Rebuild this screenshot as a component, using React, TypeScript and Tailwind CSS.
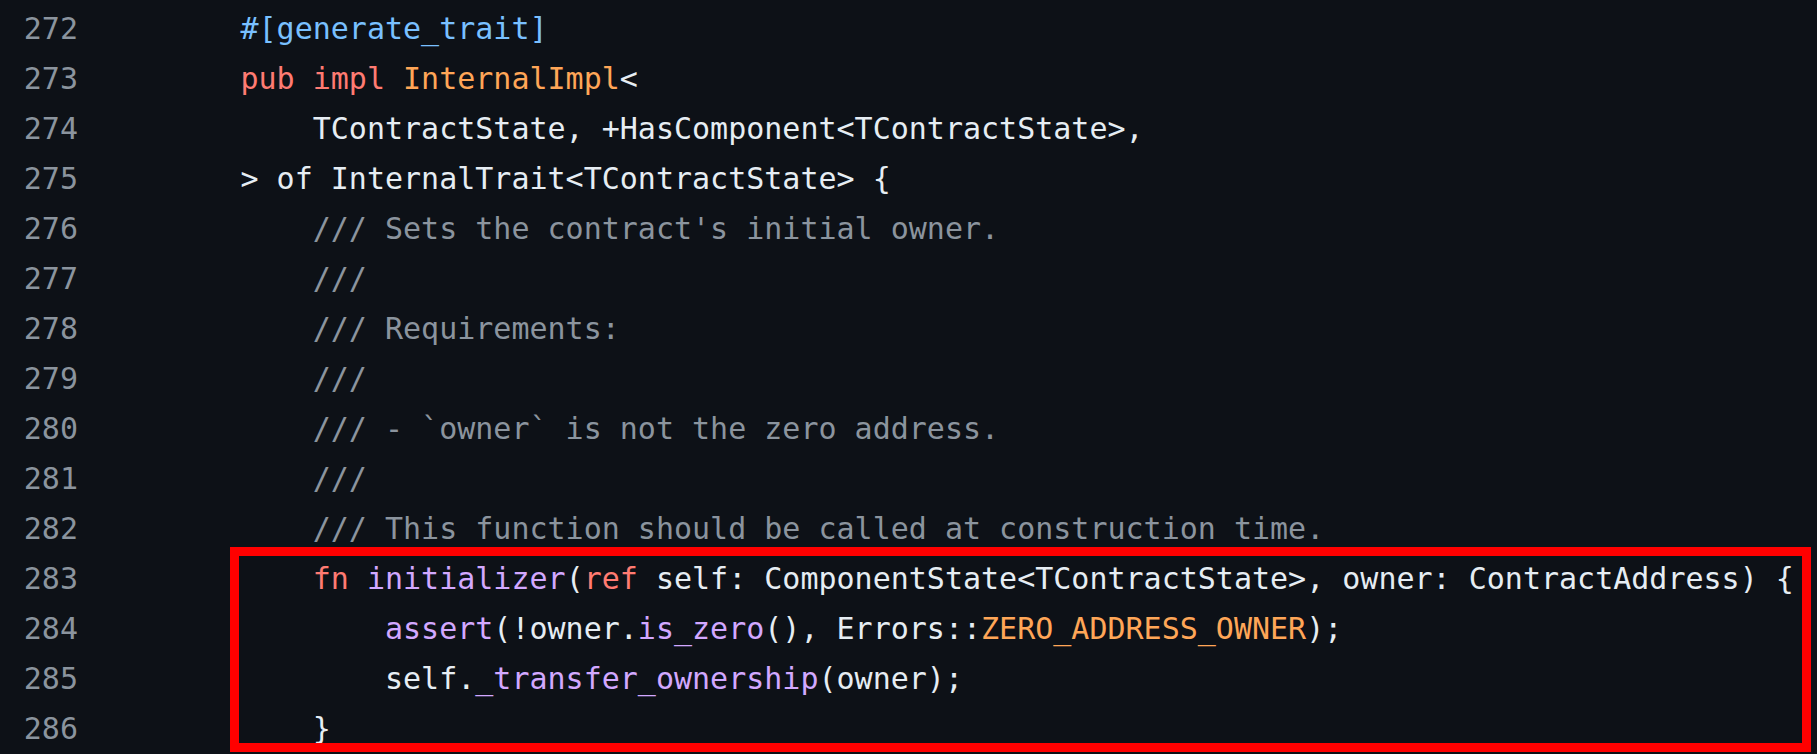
type Seg = [string, string?];

const KW = "text-[#ff7b72]";
const TY = "text-[#ffa657]";
const AT = "text-[#79c0ff]";
const FN = "text-[#d2a8ff]";
const CM = "text-[#8b949e]";

const lines: { n: number; segs: Seg[] }[] = [
  { n: 272, segs: [["        "], ["#[generate_trait]", AT]] },
  { n: 273, segs: [["        "], ["pub impl ", KW], ["InternalImpl", TY], ["<"]] },
  { n: 274, segs: [["            TContractState, +HasComponent<TContractState>,"]] },
  { n: 275, segs: [["        > of InternalTrait<TContractState> {"]] },
  { n: 276, segs: [["            "], ["/// Sets the contract's initial owner.", CM]] },
  { n: 277, segs: [["            "], ["///", CM]] },
  { n: 278, segs: [["            "], ["/// Requirements:", CM]] },
  { n: 279, segs: [["            "], ["///", CM]] },
  { n: 280, segs: [["            "], ["/// - `owner` is not the zero address.", CM]] },
  { n: 281, segs: [["            "], ["///", CM]] },
  { n: 282, segs: [["            "], ["/// This function should be called at construction time.", CM]] },
  {
    n: 283,
    segs: [
      ["            "],
      ["fn ", KW],
      ["initializer", FN],
      ["("],
      ["ref", KW],
      [" self: ComponentState<TContractState>, owner: ContractAddress) {"],
    ],
  },
  {
    n: 284,
    segs: [
      ["                "],
      ["assert", FN],
      ["(!owner."],
      ["is_zero", FN],
      ["(), Errors::"],
      ["ZERO_ADDRESS_OWNER", TY],
      [");"],
    ],
  },
  { n: 285, segs: [["                self."], ["_transfer_ownership", FN], ["(owner);"]] },
  { n: 286, segs: [["            }"]] },
];

export default function App() {
  return (
    <div
      className="relative w-full h-[754px] overflow-hidden bg-[#0d1117] pt-[4px] text-[30px] text-[#e6edf3]"
      style={{ fontFamily: "'DejaVu Sans Mono', 'Liberation Mono', monospace" }}
    >
      {lines.map((l) => (
        <div key={l.n} className="flex h-[50px] items-center leading-[50px]">
          <span className="w-[78px] shrink-0 text-right text-[#8b949e]">{l.n}</span>
          <span className="ml-[18px] whitespace-pre">
            {l.segs.map(([t, c], i) => (
              <span key={i} className={c}>
                {t}
              </span>
            ))}
          </span>
        </div>
      ))}

      <div className="absolute left-[230px] top-[547px] w-[1581px] h-[205px] border-[9px] border-[#ff0000]" />
    </div>
  );
}
